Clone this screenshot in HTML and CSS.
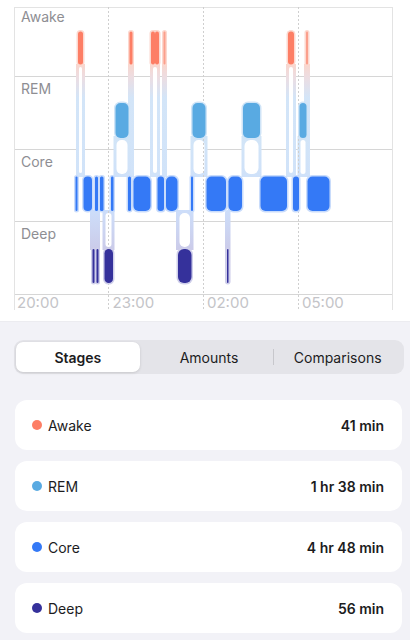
FILE: index.html
```html
<!DOCTYPE html>
<html lang="en">
<head>
<meta charset="utf-8">
<title>Sleep Stages</title>
<link rel="stylesheet" href="styles.css">
</head>
<body>
<main class="page">
  <section class="chart">
    <svg class="chart-svg" width="410" height="322" viewBox="0 0 410 322" xmlns="http://www.w3.org/2000/svg">
      <defs>
        <linearGradient id="gAC" gradientUnits="userSpaceOnUse" x1="0" y1="64" x2="0" y2="177">
          <stop offset="0" stop-color="#f9d6cd"/>
          <stop offset="0.12" stop-color="#ecdde2"/>
          <stop offset="0.3" stop-color="#d3e5f8"/>
          <stop offset="1" stop-color="#d1e3f9"/>
        </linearGradient>
        <linearGradient id="gRC" gradientUnits="userSpaceOnUse" x1="0" y1="136" x2="0" y2="177">
          <stop offset="0" stop-color="#d2e5f7"/>
          <stop offset="1" stop-color="#cfe1f9"/>
        </linearGradient>
        <linearGradient id="gCD" gradientUnits="userSpaceOnUse" x1="0" y1="210" x2="0" y2="252">
          <stop offset="0" stop-color="#cddefa"/>
          <stop offset="1" stop-color="#cbcae8"/>
        </linearGradient>
      </defs>

      <!-- grid -->
      <g class="grid">
        <line class="grid-top" x1="14.5" y1="7.5" x2="392.5" y2="7.5"/>
        <line class="grid-h" x1="14.5" y1="76.5" x2="392.5" y2="76.5"/>
        <line class="grid-h" x1="14.5" y1="149.5" x2="392.5" y2="149.5"/>
        <line class="grid-h" x1="14.5" y1="221.5" x2="392.5" y2="221.5"/>
        <line class="grid-h" x1="14.5" y1="294.5" x2="392.5" y2="294.5"/>
        <line class="grid-v" x1="14.5" y1="7" x2="14.5" y2="310"/>
        <line class="grid-v" x1="392.5" y1="7" x2="392.5" y2="310"/>
      </g>

      <g class="row-labels">
        <text x="21" y="21.5">Awake</text>
        <text x="21" y="94">REM</text>
        <text x="21" y="166.5">Core</text>
        <text x="21" y="239">Deep</text>
      </g>

      <!-- connectors -->
      <g class="connectors">
        <rect x="76" y="64" width="9" height="113" fill="url(#gAC)"/>
        <rect x="128" y="64" width="6" height="113" fill="url(#gAC)"/>
        <rect x="150" y="64" width="10" height="113" fill="url(#gAC)"/>
        <rect x="162" y="64" width="5" height="113" fill="url(#gAC)"/>
        <rect x="286" y="64" width="10" height="113" fill="url(#gAC)"/>
        <rect x="304" y="64" width="6" height="113" fill="url(#gAC)"/>

        <rect x="113.5" y="136" width="17" height="41" fill="url(#gRC)"/>
        <rect x="190.5" y="136" width="17" height="41" fill="url(#gRC)"/>
        <rect x="241.5" y="136" width="20" height="41" fill="url(#gRC)"/>
        <rect x="297.5" y="136" width="11" height="41" fill="url(#gRC)"/>

        <rect x="90" y="210" width="10" height="40" fill="url(#gCD)"/>
        <rect x="102.5" y="210" width="12" height="40" fill="url(#gCD)"/>
        <rect x="176" y="210" width="17.5" height="40" fill="url(#gCD)"/>
        <rect x="225" y="210" width="5.5" height="74" rx="2.5" fill="url(#gCD)"/>
      </g>
      <g class="holes">
        <rect x="79" y="67" width="3" height="106" rx="1.5"/>
        <rect x="153" y="67" width="4" height="106" rx="2"/>
        <rect x="289" y="67" width="4" height="106" rx="2"/>
        <rect x="116.5" y="140" width="11" height="34" rx="5"/>
        <rect x="193.5" y="140" width="11" height="34" rx="5"/>
        <rect x="244.5" y="140" width="14" height="34" rx="6"/>
        <rect x="300.5" y="140" width="5" height="34" rx="2.5"/>
        <rect x="105.5" y="213" width="6" height="34" rx="3"/>
        <rect x="179.5" y="213" width="10.5" height="34" rx="5"/>
      </g>

      <g class="grid">
        <line class="grid-d" x1="108.5" y1="7" x2="108.5" y2="310"/>
        <line class="grid-d" x1="203.5" y1="7" x2="203.5" y2="310"/>
        <line class="grid-d" x1="298.5" y1="7" x2="298.5" y2="310"/>
      </g>

      <!-- awake -->
      <g class="halo awake-halo">
        <rect x="76.5" y="30" width="8" height="36" rx="4"/>
        <rect x="128" y="30" width="6" height="36" rx="3"/>
        <rect x="149.5" y="30" width="11" height="36" rx="3.5"/>
        <rect x="162" y="30" width="5" height="36" rx="2.5"/>
        <rect x="286.5" y="30" width="9" height="36" rx="4.5"/>
        <rect x="304.5" y="30" width="5" height="36" rx="2.5"/>
      </g>
      <g class="bar awake">
        <rect x="78" y="31.5" width="5" height="33" rx="2.5"/>
        <rect x="129.5" y="31.5" width="3" height="33" rx="1.5"/>
        <rect x="151" y="31.5" width="4" height="33" rx="2"/>
        <rect x="155" y="31.5" width="4" height="33" rx="2"/>
        <rect class="faint" x="163.5" y="31.5" width="2" height="33" rx="1"/>
        <rect x="288" y="31.5" width="6" height="33" rx="3"/>
        <rect class="faint" x="306" y="31.5" width="2" height="33" rx="1"/>
      </g>

      <!-- rem -->
      <g class="halo rem-halo">
        <rect x="114" y="101.5" width="16" height="38" rx="6.5"/>
        <rect x="191" y="101.5" width="16" height="38" rx="6.5"/>
        <rect x="241.5" y="101.5" width="20" height="38" rx="6.5"/>
        <rect x="298" y="101.5" width="10" height="38" rx="5"/>
      </g>
      <g class="bar rem">
        <rect x="115.5" y="103" width="13" height="35" rx="5"/>
        <rect x="192.5" y="103" width="13" height="35" rx="5"/>
        <rect x="243" y="103" width="17" height="35" rx="5"/>
        <rect x="299.5" y="103" width="7" height="35" rx="3.5"/>
      </g>

      <!-- core -->
      <g class="halo core-halo">
        <rect x="74" y="175" width="5" height="37.5" rx="2.5"/>
        <rect x="82" y="175" width="11.5" height="37.5" rx="5"/>
        <rect x="93.5" y="175" width="6" height="37.5" rx="3"/>
        <rect x="98.5" y="175" width="6.5" height="37.5" rx="3"/>
        <rect x="109.5" y="175" width="5.5" height="37.5" rx="2.5"/>
        <rect x="126.5" y="175" width="6" height="37.5" rx="3"/>
        <rect x="132" y="175" width="20" height="37.5" rx="6"/>
        <rect x="156" y="175" width="9.5" height="37.5" rx="4"/>
        <rect x="164.5" y="175" width="14.5" height="37.5" rx="6"/>
        <rect x="189.5" y="175" width="5" height="37.5" rx="2.5"/>
        <rect x="205" y="175" width="22.5" height="37.5" rx="6"/>
        <rect x="227" y="175" width="16.5" height="37.5" rx="6"/>
        <rect x="259" y="175" width="29.5" height="37.5" rx="6"/>
        <rect x="291.5" y="175" width="9" height="37.5" rx="4"/>
        <rect x="306" y="175" width="25" height="37.5" rx="6"/>
      </g>
      <g class="bar core">
        <rect x="75.5" y="176.5" width="2" height="34.5" rx="1"/>
        <rect x="83.5" y="176.5" width="8.5" height="34.5" rx="4"/>
        <rect x="95" y="176.5" width="3" height="34.5" rx="1.5"/>
        <rect x="100" y="176.5" width="3.5" height="34.5" rx="1.5"/>
        <rect x="111" y="176.5" width="2.5" height="34.5" rx="1.2"/>
        <rect x="128" y="176.5" width="3" height="34.5" rx="1.5"/>
        <rect x="133.5" y="176.5" width="17" height="34.5" rx="5"/>
        <rect x="157.5" y="176.5" width="6.5" height="34.5" rx="3"/>
        <rect x="166" y="176.5" width="11.5" height="34.5" rx="5"/>
        <rect x="191" y="176.5" width="2" height="34.5" rx="1"/>
        <rect x="206.5" y="176.5" width="19.5" height="34.5" rx="5"/>
        <rect x="228.5" y="176.5" width="13.5" height="34.5" rx="5"/>
        <rect x="260.5" y="176.5" width="26.5" height="34.5" rx="5"/>
        <rect x="293" y="176.5" width="6" height="34.5" rx="3"/>
        <rect x="307.5" y="176.5" width="22" height="34.5" rx="5"/>
      </g>

      <!-- deep -->
      <g class="halo deep-halo">
        <rect x="91" y="247.5" width="5" height="37" rx="2.5"/>
        <rect x="95" y="247.5" width="5" height="37" rx="2.5"/>
        <rect x="103" y="247.5" width="11.5" height="37" rx="5.5"/>
        <rect x="176.5" y="247.5" width="16.5" height="37" rx="7"/>
        <rect x="225.5" y="247.5" width="4.5" height="37" rx="2"/>
      </g>
      <g class="bar deep">
        <rect x="92.5" y="249" width="2" height="34" rx="1"/>
        <rect x="96.5" y="249" width="2" height="34" rx="1"/>
        <rect x="104.5" y="249" width="8.5" height="34" rx="4.25"/>
        <rect x="178" y="249" width="13.5" height="34" rx="6"/>
        <rect x="227" y="249" width="1.5" height="34" rx="0.75"/>
      </g>

      <g class="axis-labels">
        <text x="17" y="307.5">20:00</text>
        <text x="112.5" y="307.5">23:00</text>
        <text x="207" y="307.5">02:00</text>
        <text x="302" y="307.5">05:00</text>
      </g>
    </svg>
  </section>

  <section class="summary">
    <div class="segmented">
      <div class="seg active">Stages</div>
      <div class="seg">Amounts</div>
      <div class="seg divided">Comparisons</div>
    </div>

    <ul class="stage-list">
      <li class="stage-card">
        <span class="dot dot-awake"></span>
        <span class="stage-name">Awake</span>
        <span class="stage-value">41 min</span>
      </li>
      <li class="stage-card">
        <span class="dot dot-rem"></span>
        <span class="stage-name">REM</span>
        <span class="stage-value">1 hr 38 min</span>
      </li>
      <li class="stage-card">
        <span class="dot dot-core"></span>
        <span class="stage-name">Core</span>
        <span class="stage-value">4 hr 48 min</span>
      </li>
      <li class="stage-card">
        <span class="dot dot-deep"></span>
        <span class="stage-name">Deep</span>
        <span class="stage-value">56 min</span>
      </li>
    </ul>
  </section>
</main>
</body>
</html>
```

FILE: styles.css
```css
* {
  box-sizing: border-box;
}

html, body {
  margin: 0;
  padding: 0;
}

body {
  background: #f2f2f7;
  font-family: Inter, "Noto Sans", "Liberation Sans", sans-serif;
  color: #1c1c1e;
  width: 410px;
  height: 640px;
  overflow: hidden;
}

.page {
  display: flex;
  flex-direction: column;
}

.chart {
  background: #ffffff;
  height: 322px;
  border-bottom: 1px solid #ececf0;
}

.chart-svg {
  display: block;
}

.grid-top {
  stroke: #e3e3e3;
  stroke-width: 1;
}

.grid-h {
  stroke: #d6d6d6;
  stroke-width: 1;
}

.grid-v {
  stroke: #e3e3e3;
  stroke-width: 1;
}

.grid-d {
  stroke: #cfcfcf;
  stroke-width: 1;
  stroke-dasharray: 2 2;
}

.row-labels text {
  font-family: Inter, "Noto Sans", sans-serif;
  font-size: 14px;
  fill: #8e8e93;
}

.axis-labels text {
  font-family: Inter, "Noto Sans", sans-serif;
  font-size: 15px;
  fill: #c4c4c8;
}

.holes rect {
  fill: #ffffff;
}

.awake-halo rect { fill: #fcd8cf; }
.rem-halo rect { fill: #cfe4f7; }
.core-halo rect { fill: #c9dcfb; }
.deep-halo rect { fill: #cfcfea; }

.awake rect { fill: #fd7e65; }
.awake rect.faint { fill: #fb9f8c; }
.rem rect { fill: #59aae2; }
.core rect { fill: #3479f6; }
.deep rect { fill: #35319b; }

.summary {
  padding: 18px 6px 0 14px;
}

.segmented {
  display: grid;
  grid-template-columns: 1fr 1fr 1fr;
  height: 34px;
  padding: 2px;
  border-radius: 9px;
  background: #e4e4e9;
}

.seg {
  display: flex;
  align-items: center;
  justify-content: center;
  font-size: 14px;
  font-weight: 400;
  color: #1c1c1e;
  position: relative;
}

.seg.active {
  background: #ffffff;
  border-radius: 7px;
  font-weight: 600;
  margin-right: 5px;
  box-shadow: 0 1px 3px rgba(0, 0, 0, 0.12), 0 0 1px rgba(0, 0, 0, 0.06);
}

.seg.divided::before {
  content: "";
  position: absolute;
  left: 0;
  top: 7px;
  bottom: 7px;
  width: 1px;
  background: #c7c7cc;
}

.stage-list {
  list-style: none;
  margin: 26px 2px 0 1px;
  padding: 0;
  display: flex;
  flex-direction: column;
  gap: 11px;
}

.stage-card {
  display: flex;
  align-items: center;
  height: 50px;
  padding: 0 18px 0 17px;
  background: #ffffff;
  border-radius: 12px;
  font-size: 14px;
}

.dot {
  width: 10px;
  height: 10px;
  border-radius: 50%;
  flex: none;
  margin-right: 6px;
}

.dot-awake { background: #fd7e65; }
.dot-rem { background: #59aae2; }
.dot-core { background: #3479f6; }
.dot-deep { background: #35319b; }

.stage-name {
  flex: 1;
  color: #1c1c1e;
}

.stage-value {
  font-weight: 600;
  color: #1c1c1e;
}
```
